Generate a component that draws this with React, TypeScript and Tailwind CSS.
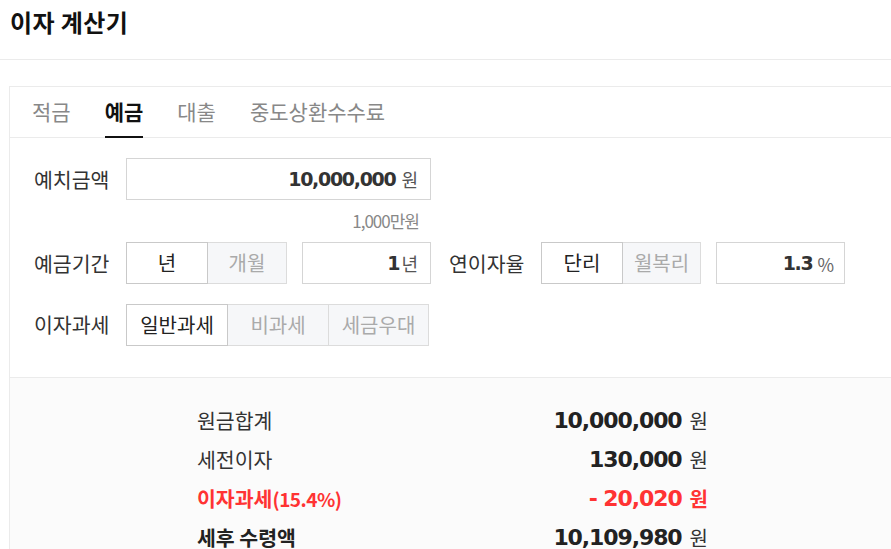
import React from "react";

const KR = "font-['Noto_Sans_CJK_KR','Noto_Sans',sans-serif]";
const NUM = "font-['DejaVu_Sans',sans-serif]";

function Toggle({ items, widths, active }: { items: string[]; widths: string[]; active: number }) {
  return (
    <div className="flex h-[42px]">
      {items.map((t, i) => (
        <div
          key={t}
          className={
            "flex items-center justify-center h-full border text-[20px] " +
            widths[i] +
            " " +
            (i === active
              ? "bg-white border-[#c9c9c9] text-[#222] z-10"
              : "bg-[#f6f7f9] border-[#dcdcdc] text-[#aaaaaa]") +
            (i > 0 ? " -ml-px" : "")
          }
        >
          {t}
        </div>
      ))}
    </div>
  );
}

function ResultRow({
  label,
  value,
  red,
  bold,
}: {
  label: React.ReactNode;
  value: string;
  red?: boolean;
  bold?: boolean;
}) {
  return (
    <div className="h-[39px] flex items-center justify-between w-[511px]">
      <div
        className={
          "text-[20.5px] " +
          (red ? "text-[#ff3333] font-bold" : bold ? "text-[#222] font-bold" : "text-[#333]")
        }
      >
        {label}
      </div>
      <div className="flex items-center">
        <span
          className={
            NUM +
            " font-bold text-[22px] tracking-[-1.1px] " +
            (red ? "text-[#ff3333]" : "text-[#222]")
          }
        >
          {value}
        </span>
        <span
          className={
            "ml-[8px] text-[20px] " + (red ? "text-[#ff3333] font-bold" : "text-[#333]")
          }
        >
          원
        </span>
      </div>
    </div>
  );
}

export default function App() {
  return (
    <div className={"w-[891px] h-[549px] overflow-hidden bg-white " + KR}>
      <div className="h-[60px] border-b border-[#ebebeb] pl-[10px] flex items-center">
        <h1 className="text-[24px] font-bold text-[#111] -mt-[16px] tracking-[0.4px]">이자 계산기</h1>
      </div>
      <div className="pl-[9px] pt-[26px]">
        <div className="w-[1000px] border-l border-t border-[#ebebeb]">
          {/* tabs */}
          <div className="h-[51px] border-b border-[#ebebeb] flex pl-[22px] gap-[34px]">
            <div className="h-full flex items-center text-[21px] text-[#888]">적금</div>
            <div className="h-full flex items-center text-[21px] text-[#111] font-bold relative">
              예금
              <div className="absolute left-0 right-0 -bottom-px h-[2px] bg-[#111]" />
            </div>
            <div className="h-full flex items-center text-[21px] text-[#888]">대출</div>
            <div className="h-full flex items-center text-[21px] text-[#888]">중도상환수수료</div>
          </div>

          {/* form */}
          <div className="pl-[24px] pt-[20px] pb-[31px]">
            <div className="flex items-center h-[42px]">
              <div className="w-[92px] text-[20.5px] text-[#333]">예치금액</div>
              <div className="w-[305px] h-[42px] border border-[#d5d5d5] flex items-center justify-end pr-[12px]">
                <span className={NUM + " font-bold text-[19px] text-[#333] tracking-[-1.3px]"}>
                  10,000,000
                </span>
                <span className="ml-[6px] text-[18px] text-[#555]">원</span>
              </div>
            </div>
            <div className="h-[42px] w-[397px] flex items-center justify-end pr-[12px]">
              <span className="text-[17px] text-[#888] tracking-[-1px]">1,000만원</span>
            </div>
            <div className="flex items-center h-[42px]">
              <div className="w-[92px] text-[20.5px] text-[#333]">예금기간</div>
              <Toggle items={["년", "개월"]} widths={["w-[82px]", "w-[80px]"]} active={0} />
              <div className="ml-[15px] w-[129px] h-[42px] border border-[#d5d5d5] flex items-center justify-end pr-[12px]">
                <span className={NUM + " font-bold text-[19px] text-[#333]"}>1</span>
                <span className="ml-[1px] text-[18px] text-[#555]">년</span>
              </div>
              <div className="ml-[18px] w-[92px] text-[20.5px] text-[#333]">연이자율</div>
              <Toggle items={["단리", "월복리"]} widths={["w-[82px]", "w-[79px]"]} active={0} />
              <div className="ml-[15px] w-[129px] h-[42px] border border-[#d5d5d5] flex items-center justify-end pr-[10px]">
                <span className={NUM + " font-bold text-[19px] text-[#333] tracking-[-1.3px]"}>1.3</span>
                <span className="ml-[5px] text-[18px] text-[#666] mt-[3px]">%</span>
              </div>
            </div>
            <div className="flex items-center h-[43px] mt-[19px]">
              <div className="w-[92px] text-[20.5px] text-[#333]">이자과세</div>
              <Toggle
                items={["일반과세", "비과세", "세금우대"]}
                widths={["w-[102px]", "w-[102px]", "w-[101px]"]}
                active={0}
              />
            </div>
          </div>

          {/* results */}
          <div className="border-t border-[#ebebeb] bg-[#fbfbfb] pt-[23px] pb-[20px] pl-[187px]">
            <ResultRow label="원금합계" value="10,000,000" />
            <ResultRow label="세전이자" value="130,000" />
            <ResultRow
              label={
                <span>
                  이자과세<span className="text-[19px] tracking-[-0.5px]">(15.4%)</span>
                </span>
              }
              value="- 20,020"
              red
            />
            <ResultRow label="세후 수령액" value="10,109,980" bold />
          </div>
        </div>
      </div>
    </div>
  );
}
